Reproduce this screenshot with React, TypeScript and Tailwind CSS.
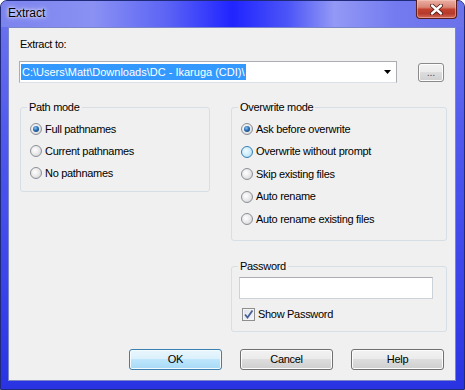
import React from "react";

type RState = "checked" | "hover" | "normal";

function Radio({ state }: { state: RState }) {
  if (state === "hover") {
    return (
      <div className="w-[12px] h-[12px] shrink-0 rounded-full border border-[#3c7fb1] bg-[radial-gradient(circle_at_40%_40%,#f2fbff_0%,#c9ebfb_55%,#8fcdec_100%)]" />
    );
  }
  return (
    <div className="w-[12px] h-[12px] shrink-0 rounded-full border border-[#8b9097] bg-[radial-gradient(circle_at_40%_40%,#ffffff_0%,#e6e6e6_55%,#c4c6c8_100%)] flex items-center justify-center">
      {state === "checked" && (
        <div className="w-[6px] h-[6px] rounded-full bg-[radial-gradient(circle_at_40%_35%,#8cc8f4_0%,#2a6db5_45%,#0d2d5c_100%)]" />
      )}
    </div>
  );
}

function RadioRow({ label, state, h }: { label: string; state: RState; h: string }) {
  return (
    <div className={`flex items-center gap-[3px] ${h}`}>
      <Radio state={state} />
      <span className="leading-[13px]">{label}</span>
    </div>
  );
}

function Btn({ label, def }: { label: string; def?: boolean }) {
  return (
    <div
      className={
        def
          ? "w-[93px] h-[21px] rounded-[3px] border border-[#3c7fb1] bg-[linear-gradient(180deg,#eaf6fd_0%,#d9f0fc_49%,#bee6fd_50%,#a7d9f5_100%)] shadow-[inset_0_0_0_1px_#f4fbff] flex items-center justify-center leading-[13px]"
          : "w-[93px] h-[21px] rounded-[3px] border border-[#707070] bg-[linear-gradient(180deg,#f2f2f2_0%,#ebebeb_49%,#dddddd_50%,#cfcfcf_100%)] shadow-[inset_0_0_0_1px_#fcfcfc] flex items-center justify-center leading-[13px]"
      }
    >
      {label}
    </div>
  );
}

export default function App() {
  return (
    <div className="w-[465px] h-[390px] overflow-hidden font-['Liberation_Sans',Arial,sans-serif] text-[11px] text-black tracking-[-0.3px]">
      <div className="w-full h-full flex flex-col rounded-t-[7px] border border-[#1f2a7a] bg-[linear-gradient(180deg,#6e76ee_0%,#5058ee_35%,#3a42ea_75%,#2a33e2_100%)]">
        {/* Title bar */}
        <div className="h-[26px] shrink-0 flex items-start rounded-t-[6px] bg-[linear-gradient(90deg,#7b83ee_0%,#8a91f3_20%,#5b63f5_36%,#2024ff_50%,#4c55f7_62%,#9399f5_72%,#747bf0_85%,#6b72ea_100%)]">
          <span className="ml-[7px] mt-[5px] text-[12px] leading-[15px] tracking-normal [text-shadow:0_0_6px_#ffffff,0_0_3px_#ffffff]">
            Extract
          </span>
          <div className="ml-auto mr-[7px] -mt-px w-[41px] h-[19px] rounded-b-[4px] border border-t-0 border-[#5a1d1d] bg-[linear-gradient(180deg,#eab0a4_0%,#d98676_40%,#c2412f_52%,#b63a2c_75%,#d36a5a_100%)] shadow-[inset_0_0_0_1px_rgba(255,210,200,0.45)] flex items-center justify-center">
            <svg width="13" height="11" viewBox="0 0 13 11">
              <path d="M2 1.5 L11 9.5 M11 1.5 L2 9.5" stroke="#4a1410" strokeWidth="4" strokeLinecap="round" />
              <path d="M2 1.5 L11 9.5 M11 1.5 L2 9.5" stroke="#ffffff" strokeWidth="2.4" strokeLinecap="round" />
            </svg>
          </div>
        </div>

        {/* Client area */}
        <div className="flex-1 ml-[7px] mr-[8px] mb-[8px] bg-[#f0f0f0] border border-[#7b86c8] pl-[10px] flex flex-col">
          <div className="mt-[10px] ml-[1px] leading-[13px]">Extract to:</div>

          <div className="mt-[10px] flex items-center">
            <div className="w-[378px] h-[22px] bg-white border border-[#abadb3] border-b-[#dbdfe6] flex items-center pl-[1px]">
              <span className="bg-[#3399ff] text-white leading-[16px] px-[1px] tracking-normal">
                {"C:\\Users\\Matt\\Downloads\\DC - Ikaruga (CDI)\\"}
              </span>
              <svg className="ml-auto mr-[5px]" width="7" height="4" viewBox="0 0 7 4">
                <path d="M0 0 H7 L3.5 4 Z" fill="#000" />
              </svg>
            </div>
            <div className="ml-[21px] w-[26px] h-[19px] rounded-[3px] border border-[#8a8a8a] bg-[linear-gradient(180deg,#f2f2f2_0%,#ebebeb_49%,#dddddd_50%,#cfcfcf_100%)] shadow-[inset_0_0_0_1px_#fcfcfc] flex items-center justify-center text-[#555] leading-[13px]">
              ...
            </div>
          </div>

          <div className="mt-[18px] flex items-start">
            <fieldset className="ml-[1px] w-[190px] border border-[#d5dfe5] rounded-[3px] pl-[9px] pt-[4px] pb-[7px]">
              <legend className="ml-[-3px] px-[2px] leading-[13px]">Path mode</legend>
              <RadioRow label="Full pathnames" state="checked" h="h-[22px]" />
              <RadioRow label="Current pathnames" state="normal" h="h-[22px]" />
              <RadioRow label="No pathnames" state="normal" h="h-[22px]" />
            </fieldset>

            <div className="ml-[21px] w-[216px] flex flex-col">
              <fieldset className="border border-[#d5dfe5] rounded-[3px] pl-[9px] pt-[4px] pb-[9px]">
                <legend className="ml-[-3px] px-[2px] leading-[13px]">Overwrite mode</legend>
                <RadioRow label="Ask before overwrite" state="checked" h="h-[22.5px]" />
                <RadioRow label="Overwrite without prompt" state="hover" h="h-[22.5px]" />
                <RadioRow label="Skip existing files" state="normal" h="h-[22.5px]" />
                <RadioRow label="Auto rename" state="normal" h="h-[22.5px]" />
                <RadioRow label="Auto rename existing files" state="normal" h="h-[22.5px]" />
              </fieldset>

              <fieldset className="mt-[19px] border border-[#d5dfe5] rounded-[3px] pl-[7px] pt-[4px] pb-[8px]">
                <legend className="ml-[-1px] px-[2px] leading-[13px]">Password</legend>
                <div className="w-[194px] h-[22px] bg-white border border-[#cdd2d8] border-t-[#abadb3]" />
                <div className="mt-[8px] h-[16px] flex items-center gap-[3px] ml-[3px]">
                  <div className="w-[13px] h-[13px] shrink-0 border border-[#8e8f8f] bg-[linear-gradient(135deg,#dfe3ea_0%,#f4f6f9_100%)] shadow-[inset_0_0_0_1px_#f4f4f4] flex items-center justify-center">
                    <svg width="11" height="11" viewBox="0 0 11 11">
                      <path d="M2 5.5 L4.5 8.5 L9.5 1.5" fill="none" stroke="#4a5f97" strokeWidth="1.8" />
                    </svg>
                  </div>
                  <span className="leading-[13px]">Show Password</span>
                </div>
              </fieldset>
            </div>
          </div>

          <div className="mt-[17px] pr-[11px] flex justify-end gap-[18px]">
            <Btn label="OK" def />
            <Btn label="Cancel" />
            <Btn label="Help" />
          </div>
        </div>
      </div>
    </div>
  );
}
